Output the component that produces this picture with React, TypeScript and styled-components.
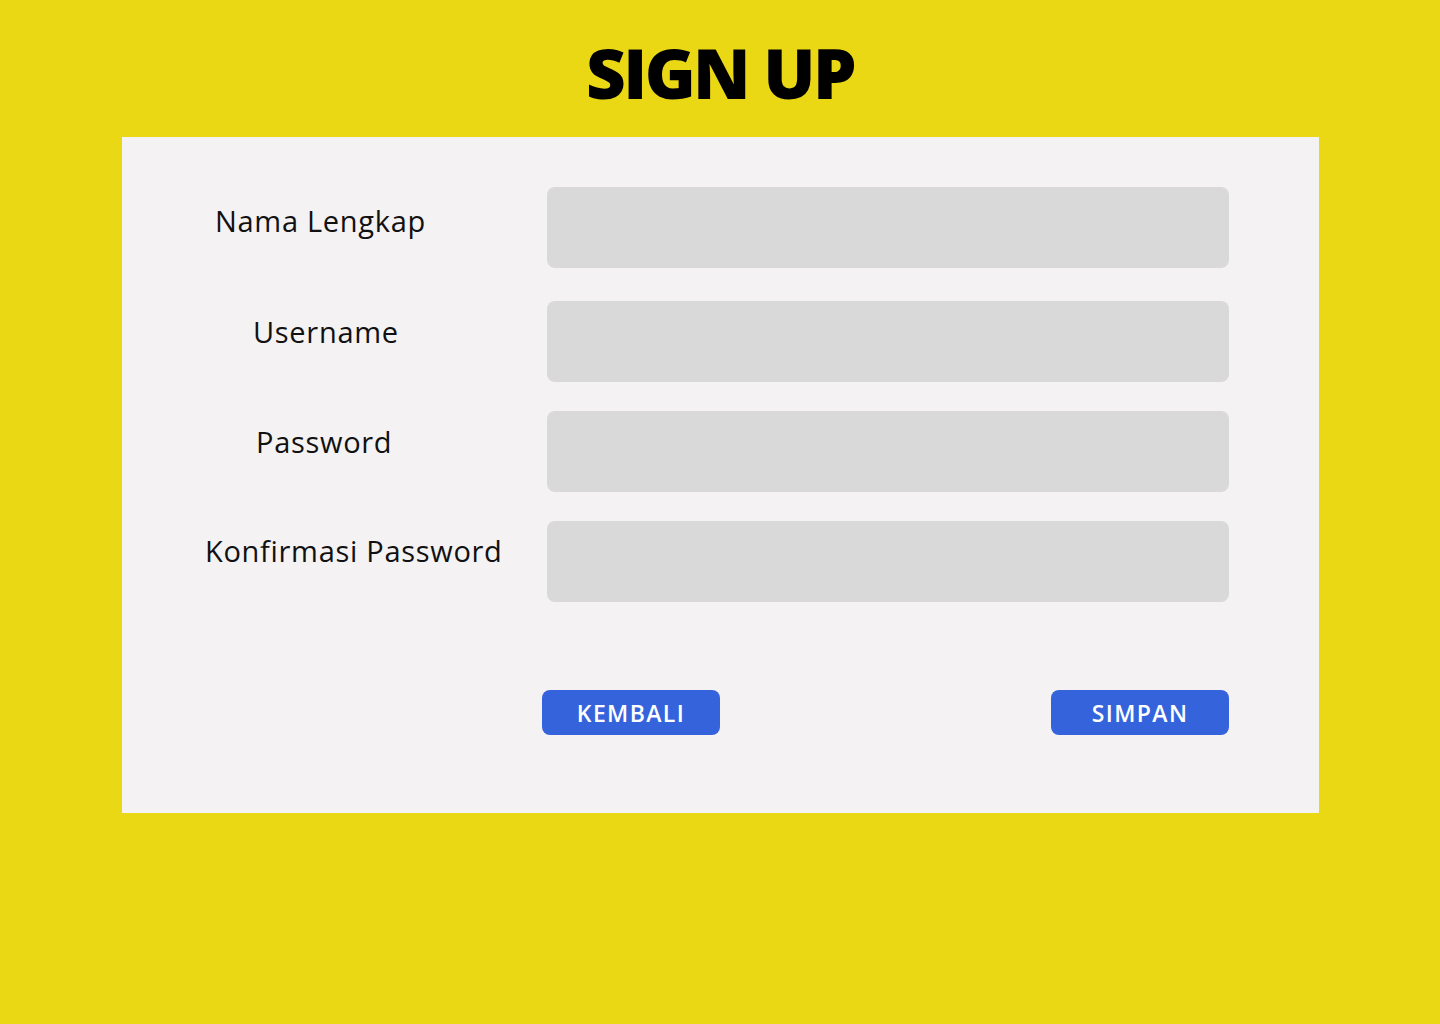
import React from "react";
import styled, { createGlobalStyle } from "styled-components";

const Global = createGlobalStyle`
  html, body { margin: 0; padding: 0; background: #ebd815; }
  body { font-family: "Open Sans", "Lato", sans-serif; }
`;

const Page = styled.div`
  width: 1440px;
  min-height: 1024px;
  background: #ebd815;
  display: flex;
  flex-direction: column;
  align-items: flex-start;
`;

const Title = styled.h1`
  margin: 0;
  width: 1440px;
  height: 137px;
  box-sizing: border-box;
  padding-top: 22px;
  text-align: center;
  font-family: "Open Sans", sans-serif;
  font-weight: 800;
  font-size: 69px;
  line-height: 100px;
  letter-spacing: -2.6px;
  color: #000;
`;

const Card = styled.div`
  margin-left: 122px;
  width: 1197px;
  height: 676px;
  box-sizing: border-box;
  background: #f4f2f3;
  padding: 50px 90px 0 0;
  display: flex;
  flex-direction: column;
`;

const Row = styled.div<{ $after: number }>`
  display: grid;
  grid-template-columns: 425px 1fr;
  margin-bottom: ${(p) => p.$after}px;
`;

const Label = styled.label<{ $indent: number; $top: number }>`
  padding-left: ${(p) => p.$indent}px;
  padding-top: ${(p) => p.$top}px;
  font-family: "Open Sans", sans-serif;
  font-size: 29px;
  line-height: 38px;
  letter-spacing: 0.7px;
  color: #111;
  white-space: nowrap;
`;

const Input = styled.input`
  height: 81px;
  border: none;
  border-radius: 8px;
  background: #d9d9d9;
  outline: none;
  padding: 0 16px;
  font-size: 24px;
  box-sizing: border-box;
`;

const Actions = styled.div`
  margin-top: 88px;
  margin-left: 420px;
  display: flex;
  justify-content: space-between;
`;

const Button = styled.button`
  width: 178px;
  height: 45px;
  border: none;
  border-radius: 8px;
  background: #3563dc;
  color: #fff;
  font-family: "Open Sans", sans-serif;
  font-weight: 600;
  font-size: 23px;
  letter-spacing: 1.4px;
  cursor: pointer;
  padding: 0;
`;

const fields = [
  { label: "Nama Lengkap", indent: 93, top: 15, after: 33, type: "text" },
  { label: "Username", indent: 131, top: 12, after: 29, type: "text" },
  { label: "Password", indent: 134, top: 12, after: 29, type: "password" },
  { label: "Konfirmasi Password", indent: 83, top: 11, after: 0, type: "password" },
];

export default function App() {
  return (
    <Page>
      <Global />
      <Title>SIGN UP</Title>
      <Card>
        {fields.map((f) => (
          <Row key={f.label} $after={f.after}>
            <Label $indent={f.indent} $top={f.top}>
              {f.label}
            </Label>
            <Input type={f.type} />
          </Row>
        ))}
        <Actions>
          <Button>KEMBALI</Button>
          <Button>SIMPAN</Button>
        </Actions>
      </Card>
    </Page>
  );
}
